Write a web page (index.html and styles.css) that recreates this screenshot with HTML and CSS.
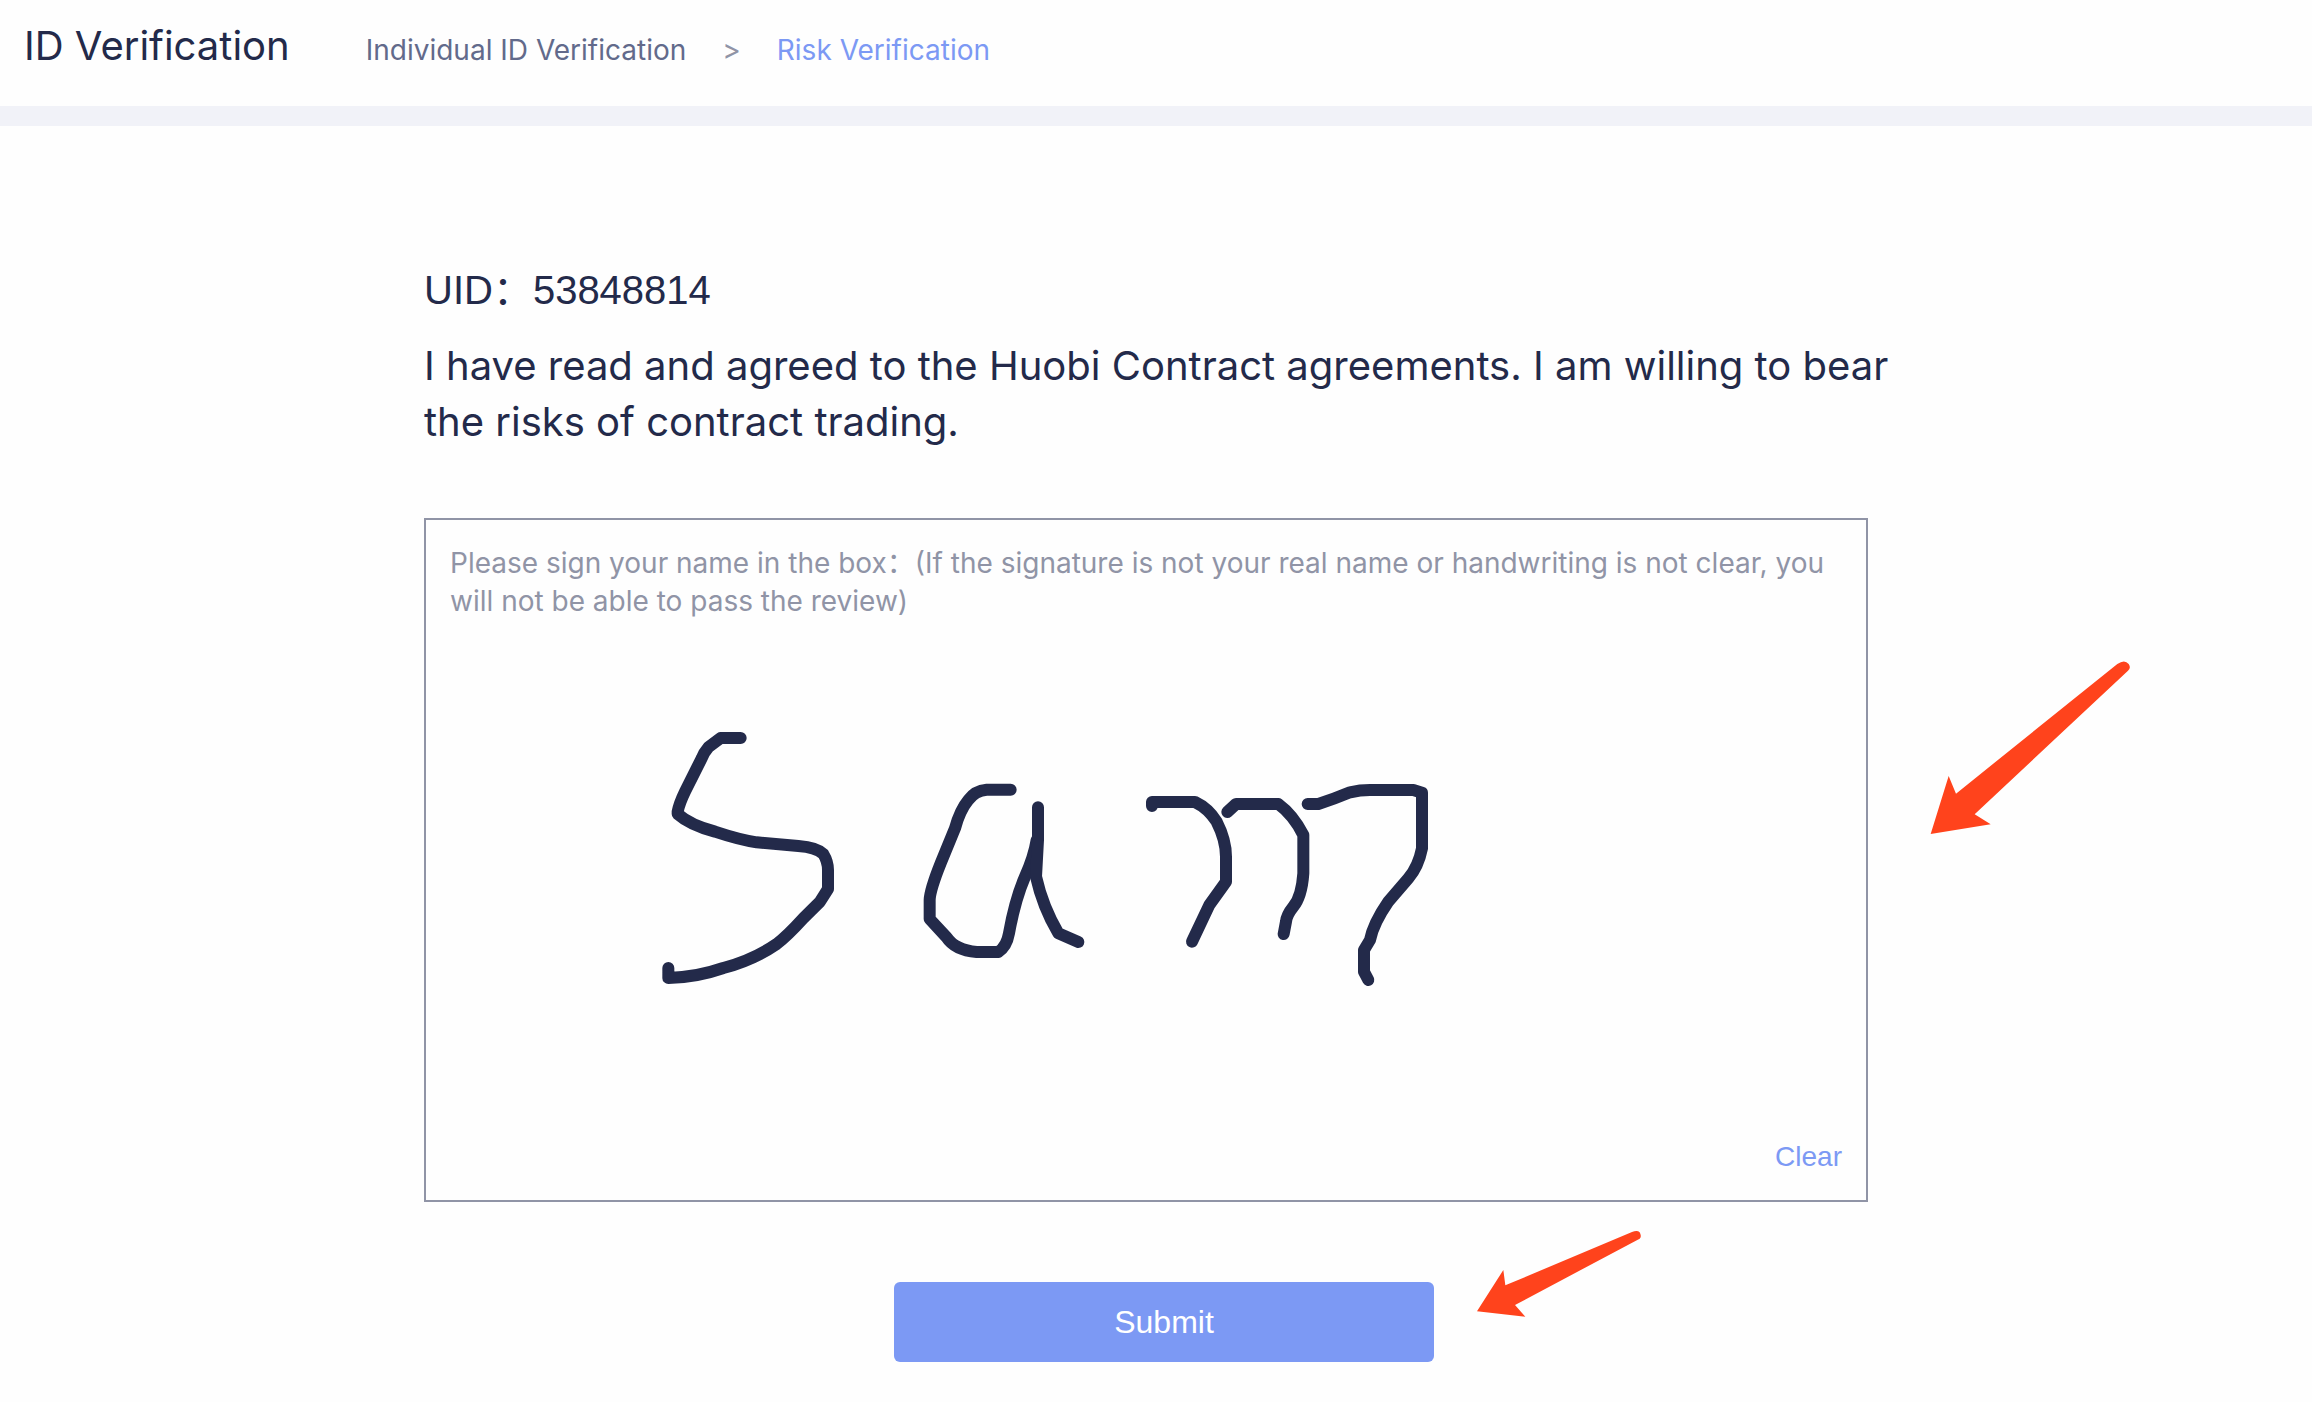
FILE: index.html
```html
<!DOCTYPE html>
<html lang="en">
<head>
    <meta charset="UTF-8">
    <meta name="viewport" content="width=device-width, initial-scale=1.0">
    <title>ID Verification</title>
    <link rel="stylesheet" href="styles.css">
</head>
<body>
    <header class="header">
        <h1>ID Verification</h1>
        <nav class="breadcrumb">
            <a href="#">Individual ID Verification</a>
            <span class="separator">&gt;</span>
            <a href="#" class="active">Risk Verification</a>
        </nav>
    </header>

    <main class="container">
        <p class="uid">UID：53848814</p>
        <p class="statement">I have read and agreed to the Huobi Contract agreements. I am willing to bear the risks of contract trading.</p>

        <div class="sign-box">
            <p class="hint">Please sign your name in the box：(If the signature is not your real name or handwriting is not clear, you will not be able to pass the review)</p>
            <svg class="signature" viewBox="0 0 2460 930" role="img" aria-label="Signature">
                <path d="M302 114H242L205 142Q192 157 185 175L135 275Q118 310 113 335V342Q150 375 225 395Q300 420 350 427L475 438Q530 442 550 462Q564 485 564 510V567L540 605L490 655Q440 710 410 732Q340 780 250 804Q170 832 85 834V804"/>
                <path d="M1112 269H1040Q1005 272 985 300Q960 330 945 385L902 490Q870 570 869 600V657L920 712Q945 750 1010 756H1075Q1100 740 1107 700Q1125 600 1155 530Q1182 470 1190 420"/>
                <path d="M1194 322V420L1188 530Q1208 620 1255 700L1315 726"/>
                <path d="M1536 318V306H1665Q1705 325 1730 365Q1758 420 1758 470V545L1708 615L1656 725"/>
                <path d="M1762 336L1788 312H1915Q1960 345 1990 405V520Q1985 590 1960 620Q1940 645 1938 665L1931 702"/>
                <path d="M2003 312H2035Q2080 298 2130 277Q2160 270 2190 270H2320L2346 278V445Q2335 500 2305 535L2245 605Q2200 670 2190 720L2172 750V815L2185 840"/>
            </svg>
            <button type="button" class="clear">Clear</button>
            <svg class="arrow arrow-sign" viewBox="0 0 780 660" aria-hidden="true">
                <path d="M92 582L146 408L168 461L652 72Q674 57 686 72Q694 84 684 92L224 523L272 553Z"/>
            </svg>
        </div>

        <div class="submit-row">
            <button type="submit" class="submit">Submit</button>
            <svg class="arrow arrow-submit" viewBox="0 0 540 300" aria-hidden="true">
                <path d="M9 274L88 150L94 196L474 36Q490 29 497 37Q504 50 497 56L123 255L154 290Z"/>
            </svg>
        </div>
    </main>
</body>
</html>
```
FILE: styles.css
```css
* {
    box-sizing: border-box;
}
body {
    margin: 0;
    font-family: Inter, "Noto Sans CJK SC", sans-serif;
    color: #232a4a;
    background-color: #fefefe;
}
h1, p {
    margin: 0;
    font-size: 40px;
    font-weight: normal;
    line-height: 56px;
}
button {
    padding: 0;
    border: none;
    font-family: "Liberation Sans", Arial, sans-serif;
    cursor: pointer;
}
.header {
    display: flex;
    align-items: baseline;
    gap: 76px;
    padding: 18px 24px 32px;
    border-bottom: 20px solid #f1f2f8;
}
.breadcrumb {
    display: flex;
    gap: 36px;
    font-size: 28px;
}
.breadcrumb a {
    color: #626a8b;
    text-decoration: none;
}
.breadcrumb .separator {
    color: #9094a6;
}
.breadcrumb .active {
    color: #7c99f4;
}
.container {
    padding: 136px 408px 40px 424px;
}
.uid {
    margin-bottom: 20px;
    font-family: "Liberation Sans", "Noto Sans CJK SC", sans-serif;
}
.sign-box {
    position: relative;
    display: flex;
    flex-direction: column;
    margin: 68px 36px 80px 0;
    padding: 24px;
    border: 2px solid #9094a6;
}
.hint {
    font-size: 28px;
    line-height: 38px;
    color: #9094a6;
}
.signature {
    width: 820px;
    margin: 80px 0 128px 190px;
    fill: none;
    stroke: #232a4a;
    stroke-width: 36;
    stroke-linecap: round;
    stroke-linejoin: round;
}
.clear {
    align-self: flex-end;
    font-size: 28px;
    line-height: 38px;
    color: #7c99f4;
    background: none;
}
.submit-row {
    position: relative;
    width: 540px;
    margin: 0 auto;
}
.submit {
    width: 100%;
    height: 80px;
    border-radius: 6px;
    font-size: 32px;
    color: #fff;
    background-color: #7c99f4;
}
.arrow {
    position: absolute;
    fill: #ff431c;
}
.arrow-sign {
    top: 120px;
    left: calc(100% + 34px);
    width: 260px;
}
.arrow-submit {
    bottom: 42px;
    left: calc(100% + 40px);
    width: 180px;
}
```
